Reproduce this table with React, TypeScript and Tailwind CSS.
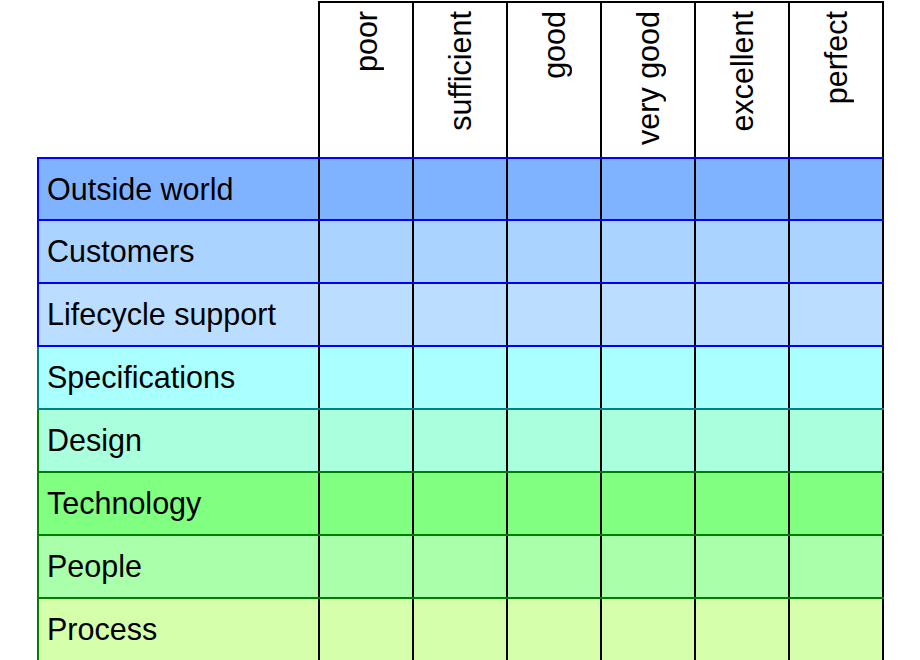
import * as React from "react";

type Row = {
  label: string;
  bg: string;
  line: string;
};

const levels = ["poor", "sufficient", "good", "very good", "excellent", "perfect"];

// border colours follow the colour groups of the rows
const rows: Row[] = [
  { label: "Outside world", bg: "bg-[#80b3ff]", line: "border-[#0000ff]" },
  { label: "Customers", bg: "bg-[#aad4ff]", line: "border-[#0000ff]" },
  { label: "Lifecycle support", bg: "bg-[#bbddff]", line: "border-[#0000ff]" },
  { label: "Specifications", bg: "bg-[#aaffff]", line: "border-[#008080]" },
  { label: "Design", bg: "bg-[#aaffdd]", line: "border-[#008000]" },
  { label: "Technology", bg: "bg-[#80ff80]", line: "border-[#008000]" },
  { label: "People", bg: "bg-[#aaffaa]", line: "border-[#008000]" },
  { label: "Process", bg: "bg-[#d5ffaa]", line: "border-[#008000]" },
];

export default function App() {
  return (
    <div className="w-[920px] h-[660px] overflow-hidden bg-white pl-[37px] pt-px font-['Liberation_Sans',Arial,sans-serif] text-black">
      {/* Column headers */}
      <div className="ml-[281px] flex h-[156px] w-fit border-t-2 border-l-2 border-black">
        {levels.map((lvl) => (
          <div
            key={lvl}
            className="flex w-[94px] items-start justify-center border-r-2 border-black bg-white pt-[8px]"
          >
            <span className="rotate-180 whitespace-nowrap text-[30.5px] leading-[34px] [writing-mode:vertical-rl]">
              {lvl}
            </span>
          </div>
        ))}
      </div>

      {/* Rows */}
      <div className="flex w-fit flex-col">
        {rows.map((row, i) => (
          <div
            key={row.label}
            className={`flex w-fit border-b-2 ${row.line} ${row.bg} ${
              i === 0 ? "h-[64px] border-t-2 border-t-[#0000ff]" : "h-[63px]"
            }`}
          >
            <div
              className={`flex w-[283px] items-center border-l-2 ${row.line} border-r-2 border-r-black pl-[8px] text-[30.5px] leading-none`}
            >
              {row.label}
            </div>
            {levels.map((lvl) => (
              <div key={lvl} className="w-[94px] border-r-2 border-black" />
            ))}
          </div>
        ))}
      </div>
    </div>
  );
}
